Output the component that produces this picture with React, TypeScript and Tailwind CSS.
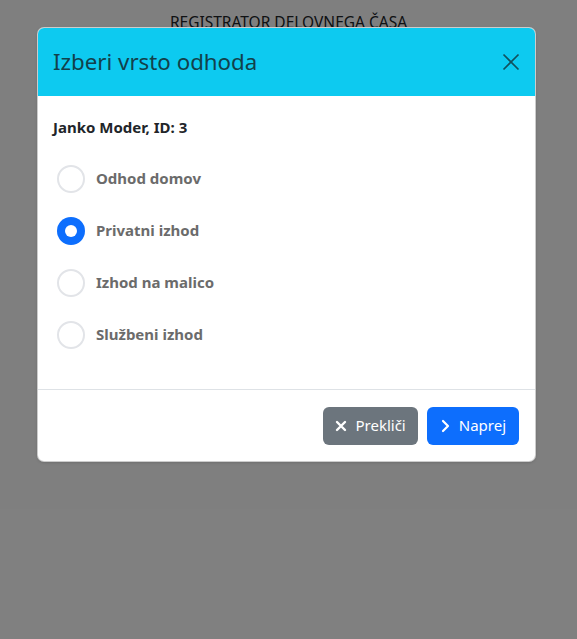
import React, { useState } from 'react';

const options = ['Odhod domov', 'Privatni izhod', 'Izhod na malico', 'Službeni izhod'];

export default function App() {
    const [selected, setSelected] = useState(1);

    return (
        <div className="relative w-[577px] h-[639px] bg-white font-['Noto_Sans',sans-serif] overflow-hidden">
            <div className="pt-[11px] text-center text-[15.5px] text-[#212529]">REGISTRATOR DELOVNEGA ČASA</div>

            {/* backdrop */}
            <div className="absolute inset-0 bg-black/50"></div>

            {/* modal */}
            <div className="absolute left-[37px] top-[27px] w-[499px] bg-white rounded-[7px] border border-black/20 overflow-hidden shadow-sm">
                <div className="h-[68px] bg-[#0dcaf0] flex items-center justify-between pl-[15px] pr-[14px]">
                    <h5 className="text-[22.3px] text-[#12414b] leading-none">Izberi vrsto odhoda</h5>
                    <svg width="20" height="20" viewBox="0 0 16 16" fill="none" stroke="#12515e" strokeWidth="1.4">
                        <path d="M2 2l12 12M14 2L2 14" />
                    </svg>
                </div>

                <div className="px-[15px] pt-[20px] pb-[40px]">
                    <div className="text-[15px] font-bold text-[#212529] mb-[26px]">Janko Moder, ID: 3</div>
                    <div className="flex flex-col gap-[24px] pl-[4px]">
                        {options.map((o, i) => (
                            <label key={o} className="flex items-center gap-[11px] cursor-pointer" onClick={() => setSelected(i)}>
                                {selected === i ? (
                                    <span className="w-[28px] h-[28px] rounded-full bg-[#0d6efd] flex items-center justify-center">
                                        <span className="w-[12px] h-[12px] rounded-full bg-white"></span>
                                    </span>
                                ) : (
                                    <span className="w-[28px] h-[28px] rounded-full border-2 border-[#e2e4e8] bg-white"></span>
                                )}
                                <span className="text-[15px] font-bold text-[#6b6b6b]">{o}</span>
                            </label>
                        ))}
                    </div>
                </div>

                <div className="border-t border-[#dee2e6] flex justify-end gap-[9px] px-[16px] pt-[17px] pb-[16px]">
                    <button className="h-[38px] px-[12px] rounded-[6px] bg-[#6c757d] text-white text-[15px] flex items-center gap-[8px]">
                        <svg width="12" height="12" viewBox="0 0 12 12" stroke="white" strokeWidth="2.4" strokeLinecap="round">
                            <path d="M2 2l8 8M10 2l-8 8" />
                        </svg>
                        Prekliči
                    </button>
                    <button className="h-[38px] px-[13px] rounded-[6px] bg-[#0d6efd] text-white text-[15px] flex items-center gap-[9px]">
                        <svg width="10" height="14" viewBox="0 0 10 14" fill="none" stroke="white" strokeWidth="2.2" strokeLinecap="round" strokeLinejoin="round">
                            <path d="M3 2l5 5-5 5" />
                        </svg>
                        Naprej
                    </button>
                </div>
            </div>
        </div>
    );
}
